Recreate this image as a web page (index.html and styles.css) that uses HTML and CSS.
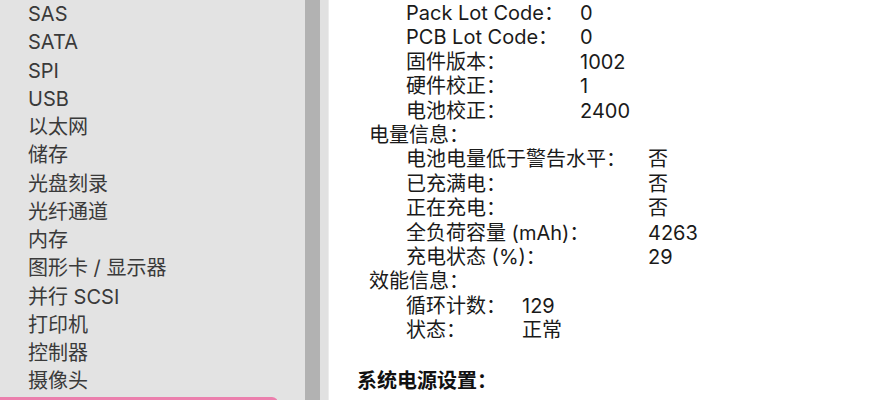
FILE: index.html
```html
<!DOCTYPE html>
<html lang="zh-CN">
<head>
  <meta charset="UTF-8" />
  <title>系统信息</title>
  <meta name="viewport" content="width=device-width, initial-scale=1.0" />
  <link rel="stylesheet" href="styles.css">
</head>
<body>
  <div class="window">
    <aside class="sidebar">
      <ul class="source-list">
        <li>SAS</li>
        <li>SATA</li>
        <li>SPI</li>
        <li>USB</li>
        <li>以太网</li>
        <li>储存</li>
        <li>光盘刻录</li>
        <li>光纤通道</li>
        <li>内存</li>
        <li>图形卡 / 显示器</li>
        <li>并行 SCSI</li>
        <li>打印机</li>
        <li>控制器</li>
        <li>摄像头</li>
        <li class="selected">电源</li>
      </ul>
      <div class="scroll-track"></div>
    </aside>
    <div class="divider"></div>

    <main class="detail">
      <div class="group">
        <div class="kv kv-model">
          <span>Pack Lot Code：</span><span>0</span>
          <span>PCB Lot Code：</span><span>0</span>
          <span>固件版本：</span><span>1002</span>
          <span>硬件校正：</span><span>1</span>
          <span>电池校正：</span><span>2400</span>
        </div>
      </div>

      <div class="group">
        <div class="group-title">电量信息：</div>
        <div class="kv kv-charge">
          <span>电池电量低于警告水平：</span><span>否</span>
          <span>已充满电：</span><span>否</span>
          <span>正在充电：</span><span>否</span>
          <span>全负荷容量 (mAh)：</span><span>4263</span>
          <span>充电状态 (%)：</span><span>29</span>
        </div>
      </div>

      <div class="group">
        <div class="group-title">效能信息：</div>
        <div class="kv kv-health">
          <span>循环计数：</span><span>129</span>
          <span>状态：</span><span>正常</span>
        </div>
      </div>

      <h4 class="section-title">系统电源设置：</h4>
    </main>
  </div>
</body>
</html>
```

FILE: styles.css
```css
html, body {
  margin: 0;
  height: 100%;
  overflow: hidden;
}

body {
  background: #fff;
  font-family: "Inter", "Noto Sans CJK SC", sans-serif;
  font-size: 20px;
  color: #1a1a1a;
}

.window {
  display: flex;
  height: 400px;
}

.sidebar {
  display: flex;
  width: 320px;
  background: #e3e3e3;
}

.source-list {
  list-style: none;
  margin: 0;
  padding: 0;
  width: 305px;
  color: #3a3a3a;
}

.source-list li {
  line-height: 28.25px;
  padding-left: 28px;
  margin-right: 27px;
  white-space: nowrap;
}

.source-list li.selected {
  background: #ec7fad;
  color: #fff;
  border-radius: 6px;
  border-top-left-radius: 0;
  border-bottom-left-radius: 0;
  margin-top: 1px;
}

.scroll-track {
  width: 15px;
  background: #b2b2b2;
}

.divider {
  width: 9px;
  background: #e1e1e1;
  border-right: 1px solid #ececec;
  box-sizing: border-box;
}

.detail {
  flex: 1;
  padding-top: 1px;
  padding-left: 28px;
  line-height: 24.4px;
}

.group-title {
  padding-left: 12px;
}

.kv {
  display: grid;
  padding-left: 49px;
  white-space: nowrap;
}

.kv-model {
  grid-template-columns: 174px auto;
}

.kv-charge {
  grid-template-columns: 242px auto;
}

.kv-health {
  grid-template-columns: 116px auto;
}

.section-title {
  margin: 26.6px 0 0;
  font-size: 20px;
  font-weight: 700;
  color: #111;
}
```
